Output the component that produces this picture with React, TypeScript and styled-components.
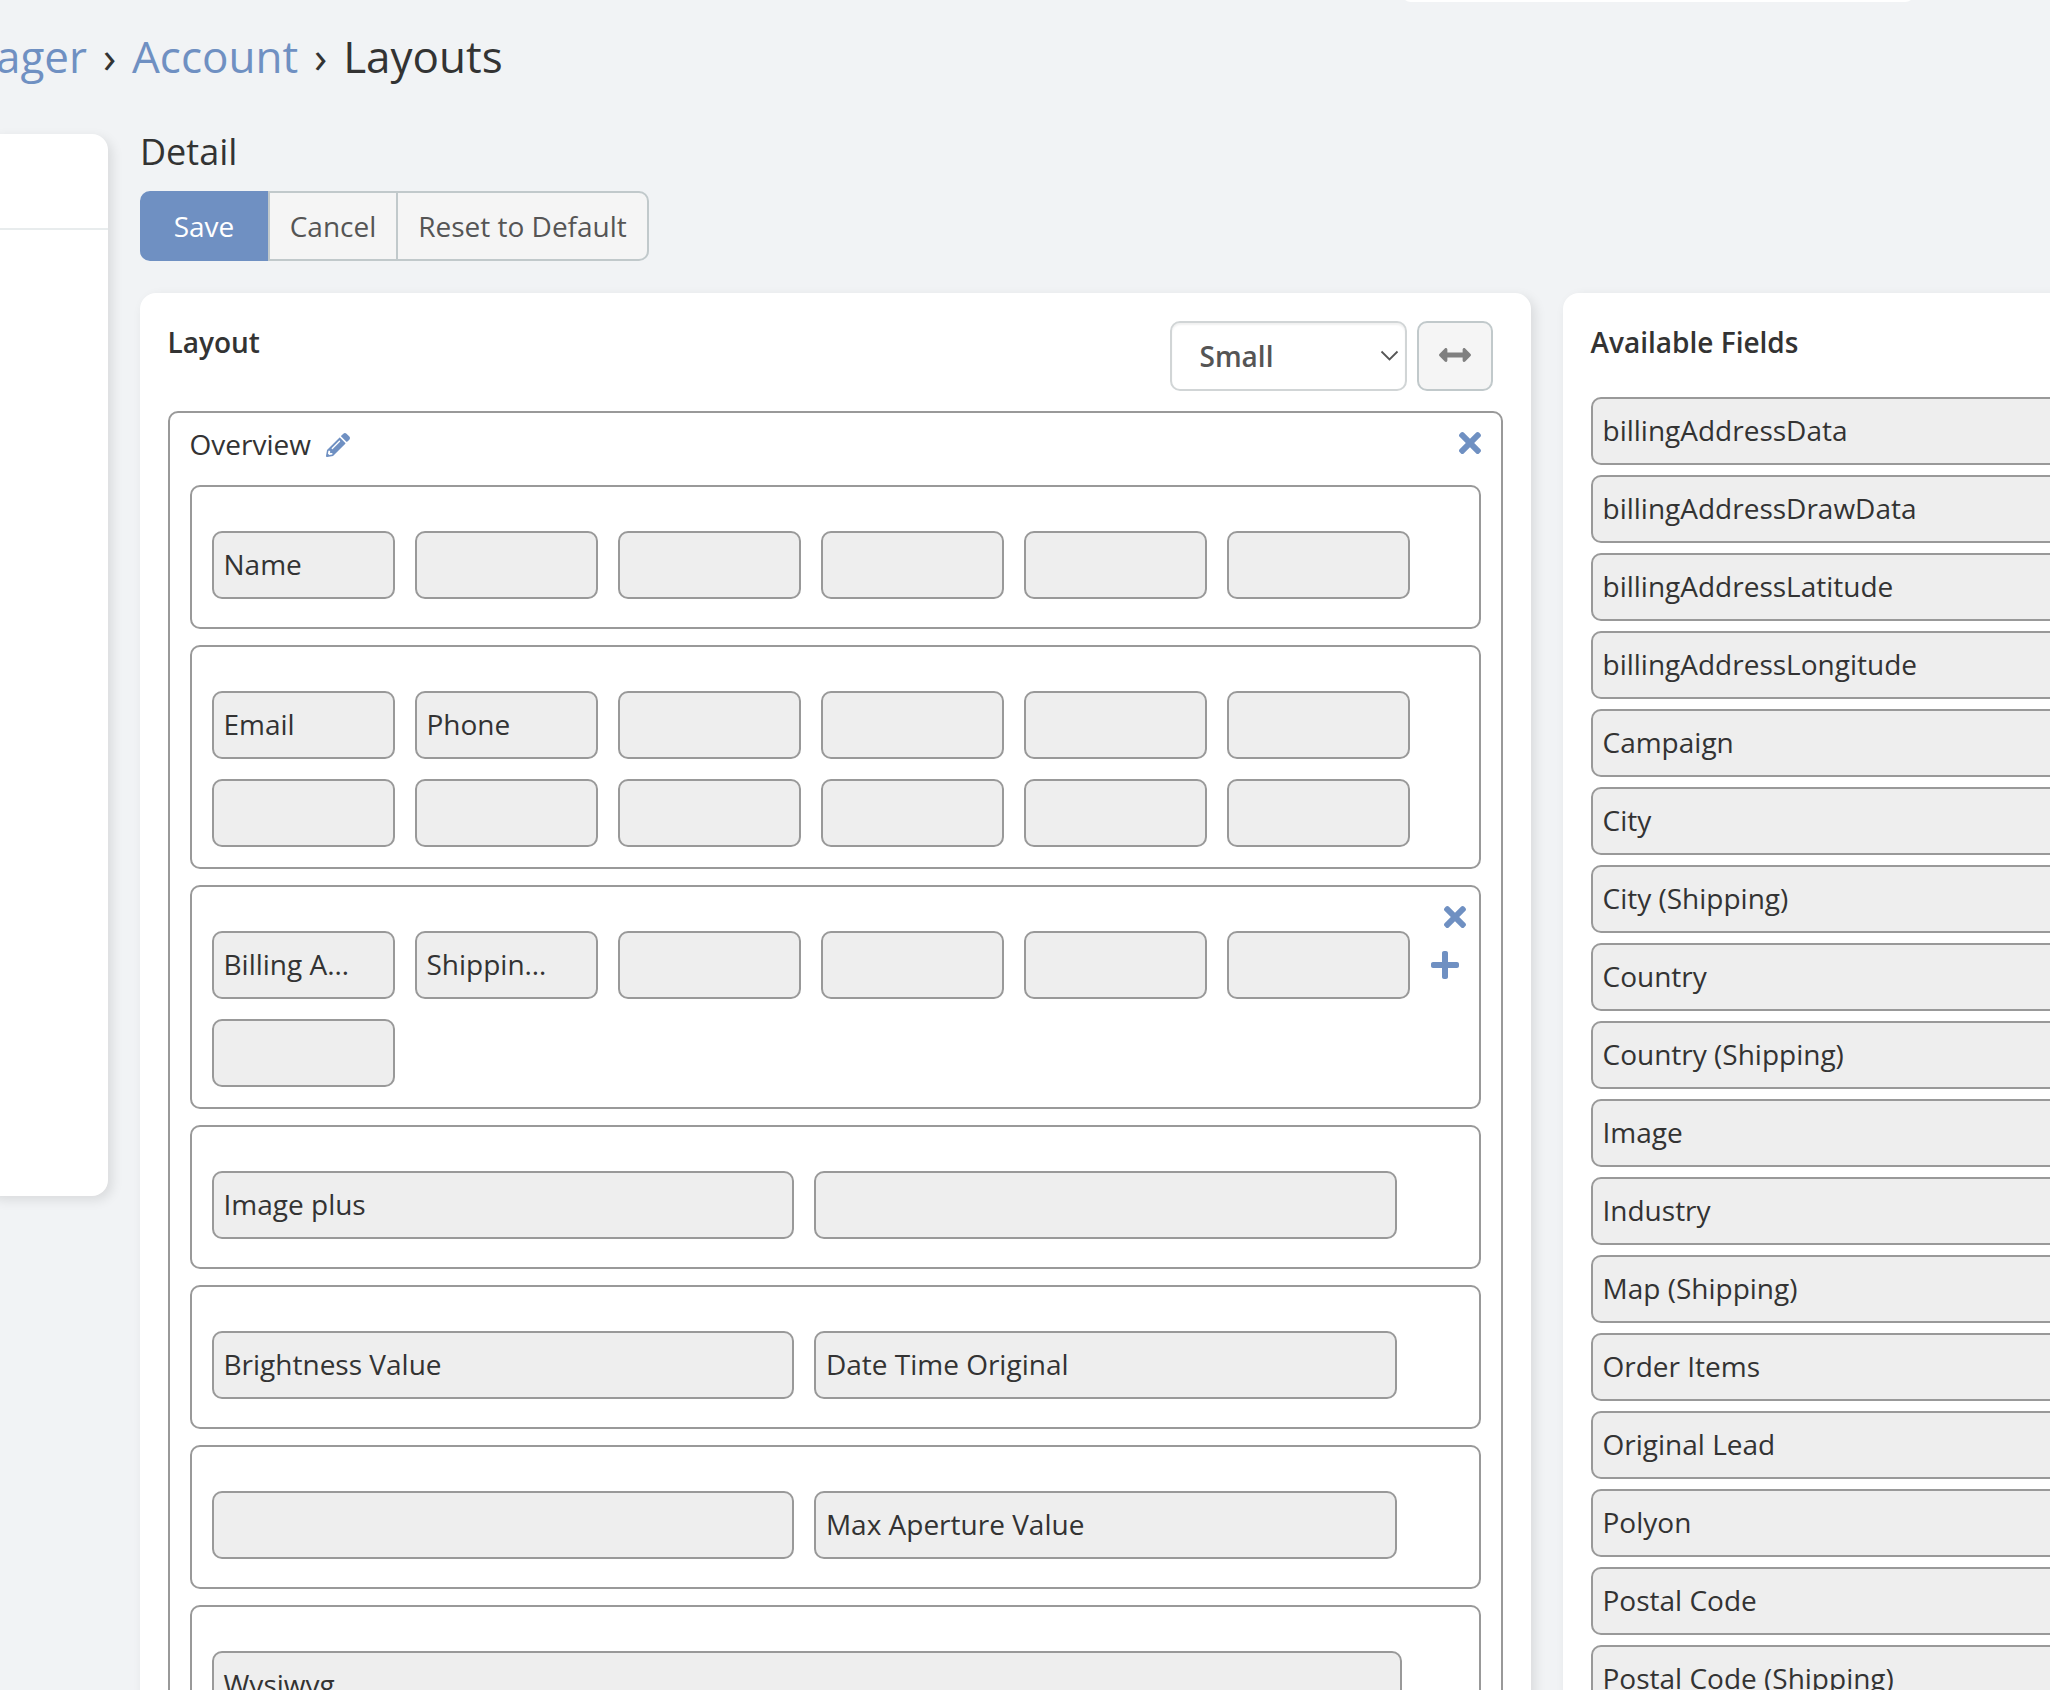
import React from "react";
import styled, { createGlobalStyle } from "styled-components";
import { FaTimes, FaPlus, FaPencilAlt, FaArrowsAltH } from "react-icons/fa";

const GlobalStyle = createGlobalStyle`
  *, *::before, *::after { box-sizing: border-box; }
  body {
    margin: 0;
    overflow: hidden;
    background: #f1f3f5;
    color: #333;
    font-family: "Open Sans", "Noto Sans", sans-serif;
    font-size: 28px;
    line-height: 40px;
  }
  ul { list-style: none; margin: 0; padding: 0; }
  h1, h2, h3 { margin: 0; }
`;

const Page = styled.div`
  position: relative;
  height: 1690px;
  overflow: hidden;
`;

const TopPanelEdge = styled.div`
  position: absolute;
  top: -18px;
  left: 1401px;
  width: 514px;
  height: 20px;
  border-radius: 0 0 10px 10px;
  background: #fff;
`;

const Breadcrumb = styled.h1`
  display: flex;
  height: 134px;
  margin-left: -4px;
  padding-top: 26px;
  font-size: 44px;
  font-weight: 400;
  line-height: 60px;
`;

const Crumb = styled.a`
  color: #6f90c2;
`;

const Separator = styled.span`
  width: 45px;
  text-align: center;
`;

const Columns = styled.div`
  display: flex;
  align-items: flex-start;
  gap: 32px;
`;

const panelShadow = "4px 4px 12px rgba(0, 0, 0, 0.1)";

const SidePanel = styled.aside`
  flex: none;
  width: 124px;
  height: 1062px;
  margin-left: -16px;
  border-radius: 16px;
  background: #fff;
  box-shadow: ${panelShadow};
`;

const SidePanelHeader = styled.div`
  height: 96px;
  border-bottom: 2px solid #e8eced;
`;

const Content = styled.main`
  flex: none;
  width: 2020px;
`;

const Title = styled.h2`
  height: 57px;
  font-size: 36px;
  font-weight: 400;
  line-height: 36px;
`;

const ButtonGroup = styled.div`
  display: flex;
  height: 70px;
  margin-bottom: 32px;
`;

const Button = styled.button<{ $width: number; $primary?: boolean }>`
  width: ${(p) => p.$width}px;
  height: 70px;
  padding: 0;
  border: 2px solid ${(p) => (p.$primary ? "#6f90c2" : "#c1c9cb")};
  background: ${(p) => (p.$primary ? "#6f90c2" : "#f5f5f5")};
  color: ${(p) => (p.$primary ? "#fff" : "#555")};
  font: inherit;

  &:first-child { border-radius: 10px 0 0 10px; }
  &:last-child { border-radius: 0 10px 10px 0; margin-left: -2px; }
`;

const Panels = styled.div`
  display: flex;
  gap: 32px;
`;

const Panel = styled.section<{ $width: number }>`
  flex: none;
  width: ${(p) => p.$width}px;
  height: 1500px;
  padding: 28px;
  border-radius: 16px;
  background: #fff;
  box-shadow: ${panelShadow};
`;

const PanelHeader = styled.header<{ $height: number }>`
  display: flex;
  justify-content: space-between;
  height: ${(p) => p.$height}px;
`;

const PanelTitle = styled.h3`
  margin-left: -0.5px;
  padding-top: 1px;
  font-size: 28px;
  font-weight: 600;
`;

const Tools = styled.div`
  display: flex;
  gap: 10px;
  margin-right: 10px;
`;

const Select = styled.div`
  display: flex;
  align-items: center;
  justify-content: space-between;
  width: 237px;
  height: 70px;
  padding: 0 6px 0 27.5px;
  border: 2px solid #d1d5d6;
  border-radius: 10px;
  box-shadow: inset 0 2px 2px rgba(0, 0, 0, 0.06);
  color: #555;
  font-weight: 600;
`;

const IconButton = styled.button`
  display: grid;
  place-items: center;
  width: 76px;
  height: 70px;
  padding: 0 0 2px;
  border: 2px solid #c1c9cb;
  border-radius: 10px;
  background: #f5f5f5;
  color: #808080;
`;

const LayoutBox = styled.div`
  height: 1400px;
  padding: 0 20px;
  border: 2px solid #999;
  border-radius: 10px;
`;

const LayoutBoxHeader = styled.header`
  display: flex;
  justify-content: space-between;
  height: 72px;
  padding-top: 11px;
`;

const LayoutName = styled.div`
  display: flex;
  gap: 15px;
  margin-left: -0.5px;
`;

const EditLink = styled.a`
  padding-top: 9px;
  color: #6f90c2;
  line-height: 0;
`;

const BoxRemove = styled.a`
  margin: 3px -4.5px 0 0;
  color: #6f90c2;
  line-height: 0;
`;

const Rows = styled.ul`
  display: flex;
  flex-direction: column;
  gap: 16px;
`;

const Row = styled.li<{ $lines: number }>`
  flex: none;
  position: relative;
  height: ${(p) => (p.$lines > 1 ? 224 : 144)}px;
  padding: 44px 20px 0;
  border: 2px solid #999;
  border-radius: 10px;
`;

const Cells = styled.ul<{ $cell: number }>`
  display: grid;
  grid-template-columns: repeat(auto-fill, ${(p) => p.$cell}px);
  gap: 20px;
  width: 1198px;
`;

const Cell = styled.li`
  height: 68px;
  padding: 11px 9.5px;
  border: 2px solid #999;
  border-radius: 10px;
  background: #eee;
  white-space: nowrap;
`;

const FieldList = styled.ul`
  display: flex;
  flex-direction: column;
  gap: 10px;
`;

const RowRemove = styled.a`
  position: absolute;
  top: 14px;
  right: 8px;
  color: #6f90c2;
  line-height: 0;
`;

const CellAdd = styled.a`
  position: absolute;
  top: 62px;
  right: 18.5px;
  color: #6f90c2;
  line-height: 0;
`;

type RowData = { cell: number; cells: string[]; active?: boolean };

const rows: RowData[] = [
  { cell: 183, cells: ["Name", "", "", "", "", ""] },
  { cell: 183, cells: ["Email", "Phone", "", "", "", "", "", "", "", "", "", ""] },
  { cell: 183, cells: ["Billing A…", "Shippin…", "", "", "", "", ""], active: true },
  { cell: 582.4, cells: ["Image plus", ""] },
  { cell: 582.4, cells: ["Brightness Value", "Date Time Original"] },
  { cell: 582.4, cells: ["", "Max Aperture Value"] },
  { cell: 1190, cells: ["Wysiwyg"] },
];

const fields = [
  "billingAddressData",
  "billingAddressDrawData",
  "billingAddressLatitude",
  "billingAddressLongitude",
  "Campaign",
  "City",
  "City (Shipping)",
  "Country",
  "Country (Shipping)",
  "Image",
  "Industry",
  "Map (Shipping)",
  "Order Items",
  "Original Lead",
  "Polyon",
  "Postal Code",
  "Postal Code (Shipping)",
];

const Chevron = () => (
  <svg width="19" height="12" viewBox="0 0 19 12" fill="none" stroke="#555" strokeWidth="1.8">
    <path d="M1.5 1.5 9.5 9.5 17.5 1.5" />
  </svg>
);

const LayoutRow = ({ row }: { row: RowData }) => (
  <Row $lines={row.cells.length > 6 ? 2 : 1}>
    <Cells $cell={row.cell}>
      {row.cells.map((label, i) => (
        <Cell key={i}>{label}</Cell>
      ))}
    </Cells>
    {row.active && (
      <>
        <RowRemove><FaTimes size={32} /></RowRemove>
        <CellAdd><FaPlus size={32} /></CellAdd>
      </>
    )}
  </Row>
);

export default function App() {
  return (
    <Page>
      <GlobalStyle />
      <TopPanelEdge />
      <Breadcrumb>
        <Crumb>ager</Crumb>
        <Separator>›</Separator>
        <Crumb>Account</Crumb>
        <Separator>›</Separator>
        <span>Layouts</span>
      </Breadcrumb>
      <Columns>
        <SidePanel>
          <SidePanelHeader />
        </SidePanel>
        <Content>
          <Title>Detail</Title>
          <ButtonGroup>
            <Button $width={128} $primary>Save</Button>
            <Button $width={130}>Cancel</Button>
            <Button $width={253}>Reset to Default</Button>
          </ButtonGroup>
          <Panels>
            <Panel $width={1391}>
              <PanelHeader $height={90}>
                <PanelTitle>Layout</PanelTitle>
                <Tools>
                  <Select>
                    Small
                    <Chevron />
                  </Select>
                  <IconButton><FaArrowsAltH size={32} /></IconButton>
                </Tools>
              </PanelHeader>
              <LayoutBox>
                <LayoutBoxHeader>
                  <LayoutName>
                    <span>Overview</span>
                    <EditLink><FaPencilAlt size={24} /></EditLink>
                  </LayoutName>
                  <BoxRemove><FaTimes size={32} /></BoxRemove>
                </LayoutBoxHeader>
                <Rows>
                  {rows.map((row, i) => (
                    <LayoutRow key={i} row={row} />
                  ))}
                </Rows>
              </LayoutBox>
            </Panel>
            <Panel $width={597}>
              <PanelHeader $height={76}>
                <PanelTitle>Available Fields</PanelTitle>
              </PanelHeader>
              <FieldList>
                {fields.map((field) => (
                  <Cell key={field}>{field}</Cell>
                ))}
              </FieldList>
            </Panel>
          </Panels>
        </Content>
      </Columns>
    </Page>
  );
}
